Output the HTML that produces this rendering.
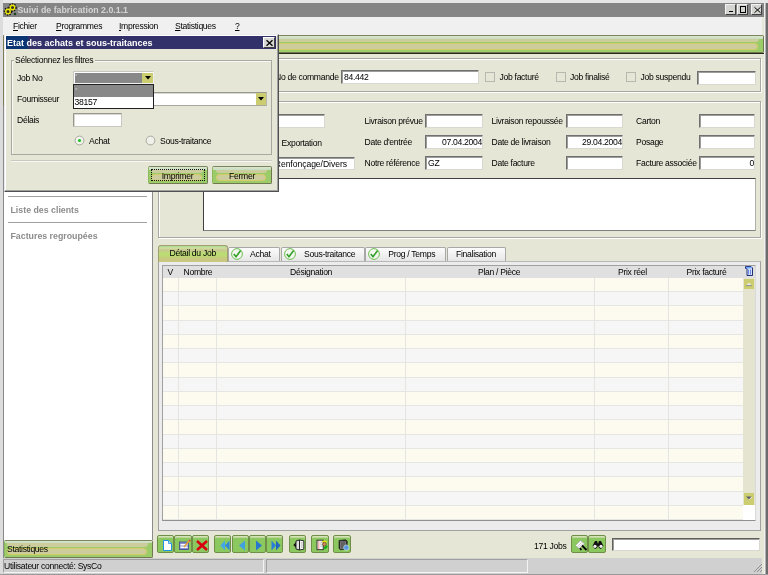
<!DOCTYPE html>
<html><head><meta charset="utf-8">
<style>
*{box-sizing:border-box;margin:0;padding:0}
html,body{width:768px;height:575px;overflow:hidden;-webkit-font-smoothing:antialiased;background:#e6e6d6;font-family:"Liberation Sans",sans-serif;font-size:8.6px;letter-spacing:-0.3px;color:#000}
.a{position:absolute}
svg.a{overflow:visible}
.t{position:absolute;white-space:nowrap;line-height:10px}
.tb{position:absolute;background:#fff;border:1px solid;border-color:#707070 #d8d8d0 #d8d8d0 #707070;box-shadow:inset 1px 1px 0 #9c9c98}
.gb{position:absolute;border:1px solid #a8a8a0;box-shadow:inset 1px 1px 0 #fff, 1px 1px 0 #fff}
.cb{position:absolute;width:10px;height:10px;border:1px solid #b8b8b0;background:#e6e6d6}
.gbtn{position:absolute;background:#8cc860;border:1px solid #6f8f48;border-radius:2px;box-shadow:inset 0 1px 0 #d8e0b8, inset 0 2px 0 #b8d898}
</style></head><body><div style="position:absolute;left:0;top:0;width:768px;height:575px;overflow:hidden;will-change:transform">
<div class="a" style="left:0px;top:0px;width:768px;height:3px;background:#e6e6e6"></div>
<div class="a" style="left:0px;top:0px;width:3px;height:575px;background:#dcdcdc"></div>
<div class="a" style="left:2.5px;top:16px;width:1.5px;height:543px;background:#8a8a8a"></div>
<div class="a" style="left:2.5px;top:35.5px;width:1.5px;height:70.5px;background:#7c7c58"></div>
<div class="a" style="left:762px;top:0px;width:6px;height:575px;background:#e6e6d6"></div>
<div class="a" style="left:764px;top:0px;width:1px;height:575px;background:#f0f0f0"></div>
<div class="a" style="left:765px;top:0px;width:1px;height:575px;background:#b0b0b0"></div>
<div class="a" style="left:766px;top:0px;width:2px;height:575px;background:#6c6c6c"></div>
<div class="a" style="left:762px;top:0px;width:6px;height:3px;background:#e6e6e6"></div>
<div class="a" style="left:3px;top:3px;width:761px;height:13.5px;background:#858585"></div>
<div class="t" style="left:17.5px;top:3.5px;font-weight:bold;font-size:8.8px;letter-spacing:0;color:#d4d4d4;line-height:12px">Suivi de fabrication 2.0.1.1</div>
<svg class="a" style="left:3.5px;top:3px" width="13" height="13" viewBox="0 0 13 13"><circle cx="4" cy="8.5" r="3" fill="none" stroke="#181810" stroke-width="2.6" stroke-dasharray="1.2 1"/><circle cx="8.5" cy="4.5" r="3" fill="none" stroke="#181810" stroke-width="2.6" stroke-dasharray="1.2 1"/><circle cx="4" cy="8.5" r="2.2" fill="#303020" stroke="#f0e800" stroke-width="1.4"/><circle cx="8.5" cy="4.5" r="2.2" fill="#303020" stroke="#f0e800" stroke-width="1.4"/><circle cx="11" cy="11" r="1.3" fill="#204020"/></svg>
<div class="a" style="left:725px;top:4px;width:11px;height:10.5px;background:#d4d4d0;border:1px solid;border-color:#f4f4f4 #404040 #404040 #f4f4f4"><div class="a" style="left:3px;top:5.5px;width:4px;height:1.5px;background:#000"></div></div>
<div class="a" style="left:737px;top:4px;width:11px;height:10.5px;background:#d4d4d0;border:1px solid;border-color:#f4f4f4 #404040 #404040 #f4f4f4"><div class="a" style="left:2px;top:1px;width:6px;height:6.5px;border:1px solid #000;border-top-width:1.6px"></div></div>
<div class="a" style="left:750.5px;top:4px;width:11.5px;height:10.5px;background:#d4d4d0;border:1px solid;border-color:#f4f4f4 #404040 #404040 #f4f4f4"><svg class="a" style="left:2.2px;top:1.8px" width="7" height="6"><path d="M0.5 0.3 L6.5 5.7 M6.5 0.3 L0.5 5.7" stroke="#000" stroke-width="1"/></svg></div>
<div class="a" style="left:3px;top:16.5px;width:759px;height:18.5px;background:#f0f0f0"></div>
<div class="t" style="left:13px;top:21px;"><u>F</u>ichier</div>
<div class="t" style="left:56px;top:21px;"><u>P</u>rogrammes</div>
<div class="t" style="left:119px;top:21px;"><u>I</u>mpression</div>
<div class="t" style="left:175px;top:21px;"><u>S</u>tatistiques</div>
<div class="t" style="left:235px;top:21px;"><u>?</u></div>
<div class="a" style="left:4px;top:52.5px;width:760px;height:1.5px;background:#282818"></div>
<div class="a" style="left:4px;top:35px;width:760px;height:18px;background:#9ccc6a;border:1px solid;border-color:#7c8460 #707850 #707850 #8cb860;border-radius:2px"><div class="a" style="left:0;right:0;top:0;height:2.5px;background:linear-gradient(#dce6c8,#c4dcc4)"></div><div class="a" style="left:2.5px;right:4px;top:2.5px;height:3.5px;background:#cccc9c;border-radius:0 0 3px 3px"></div><div class="a" style="left:2.5px;right:5px;top:7px;bottom:2px;background:#cccc9c;border:1px solid #d4cc68;border-radius:5px/4px"></div></div>
<div class="a" style="left:4px;top:54px;width:149px;height:486px;background:#fff;border-right:1px solid #8c8c8c"></div>
<div class="a" style="left:8px;top:196px;width:139px;height:1px;background:#a0a0a0"></div>
<div class="a" style="left:8px;top:222px;width:139px;height:1px;background:#a0a0a0"></div>
<div class="t" style="left:10.5px;top:205px;font-weight:bold;font-size:8.8px;letter-spacing:0;color:#8c8c8c">Liste des clients</div>
<div class="t" style="left:10.5px;top:231px;font-weight:bold;font-size:8.8px;letter-spacing:0;color:#8c8c8c">Factures regroupées</div>
<div class="gb" style="left:157.5px;top:58px;width:603.5px;height:33.5px"></div>
<div class="t" style="left:275px;top:72px;">No de commande</div>
<div class="tb" style="left:341px;top:70px;width:138px;height:14px;"><div class="t" style="left:2px;top:1px">84.442</div></div>
<div class="cb" style="left:485px;top:72px"></div>
<div class="t" style="left:499.5px;top:72px;">Job facturé</div>
<div class="cb" style="left:556px;top:72px"></div>
<div class="t" style="left:570px;top:72px;">Job finalisé</div>
<div class="cb" style="left:626px;top:72px"></div>
<div class="t" style="left:640.5px;top:72px;">Job suspendu</div>
<div class="tb" style="left:697px;top:71px;width:59px;height:14px;"></div>
<div class="gb" style="left:157.5px;top:101px;width:603.5px;height:136.5px"></div>
<div class="tb" style="left:230px;top:114px;width:95px;height:14px;"></div>
<div class="t" style="left:281.5px;top:137.5px;">Exportation</div>
<div class="tb" style="left:240px;top:157px;width:115px;height:12.5px;"><div class="t" style="right:7px;top:1px;text-align:right"><span style='letter-spacing:-0.05px'>Renfonçage/Divers</span></div></div>
<div class="t" style="left:364.5px;top:115.5px;">Livraison prévue</div>
<div class="t" style="left:364.5px;top:136.5px;">Date d'entrée</div>
<div class="t" style="left:364.5px;top:157.5px;">Notre référence</div>
<div class="t" style="left:491.5px;top:115.5px;">Livraison repoussée</div>
<div class="t" style="left:491.5px;top:136.5px;">Date de livraison</div>
<div class="t" style="left:491.5px;top:157.5px;">Date facture</div>
<div class="t" style="left:636px;top:115.5px;">Carton</div>
<div class="t" style="left:636px;top:136.5px;">Posage</div>
<div class="t" style="left:636px;top:157.5px;">Facture associée</div>
<div class="tb" style="left:425px;top:114px;width:58px;height:14px;"></div>
<div class="tb" style="left:425px;top:135px;width:58px;height:13.5px;"><div class="t" style="right:0px;top:1px;text-align:right">07.04.2004</div></div>
<div class="tb" style="left:425px;top:156px;width:58px;height:13.5px;"><div class="t" style="left:2px;top:1px">GZ</div></div>
<div class="tb" style="left:566px;top:114px;width:57px;height:14px;"></div>
<div class="tb" style="left:566px;top:135px;width:57px;height:13.5px;"><div class="t" style="right:0px;top:1px;text-align:right">29.04.2004</div></div>
<div class="tb" style="left:566px;top:156px;width:57px;height:13.5px;"></div>
<div class="tb" style="left:699px;top:114px;width:56px;height:14px;"></div>
<div class="tb" style="left:699px;top:135px;width:56px;height:13.5px;"></div>
<div class="tb" style="left:699px;top:156px;width:56px;height:13.5px;"><div class="t" style="right:0px;top:1px;text-align:right">0</div></div>
<div class="a" style="left:203px;top:178px;width:553px;height:53px;background:#fff;border:1px solid;border-color:#404040 #b0b0a8 #808080 #404040"></div>
<div class="a" style="left:157.5px;top:260.5px;width:603.0px;height:270.0px;background:#ececec;border:1px solid #a0a0a0;border-top-color:#b8b8b8"></div>
<div class="a" style="left:227.5px;top:247px;width:52.5px;height:14px;background:linear-gradient(#fcfcfc,#e6e6e6);border:1px solid #a8a8a8;border-bottom:none;border-radius:2px 2px 0 0"><svg class="a" style="left:2.3px;top:-0.5px" width="12" height="12" viewBox="0 0 12 12"><circle cx="6" cy="6" r="5.4" fill="#f4f6f0" stroke="#6cc050" stroke-width="1"/><path d="M2.8 6 L5 8.8 L9.6 2.6" fill="none" stroke="#30a028" stroke-width="1.6"/></svg><div class="t" style="left:21.5px;top:1px">Achat</div></div>
<div class="a" style="left:280.5px;top:247px;width:84.0px;height:14px;background:linear-gradient(#fcfcfc,#e6e6e6);border:1px solid #a8a8a8;border-bottom:none;border-radius:2px 2px 0 0"><svg class="a" style="left:2.3px;top:-0.5px" width="12" height="12" viewBox="0 0 12 12"><circle cx="6" cy="6" r="5.4" fill="#f4f6f0" stroke="#6cc050" stroke-width="1"/><path d="M2.8 6 L5 8.8 L9.6 2.6" fill="none" stroke="#30a028" stroke-width="1.6"/></svg><div class="t" style="left:22.5px;top:1px">Sous-traitance</div></div>
<div class="a" style="left:364.5px;top:247px;width:81.5px;height:14px;background:linear-gradient(#fcfcfc,#e6e6e6);border:1px solid #a8a8a8;border-bottom:none;border-radius:2px 2px 0 0"><svg class="a" style="left:2.3px;top:-0.5px" width="12" height="12" viewBox="0 0 12 12"><circle cx="6" cy="6" r="5.4" fill="#f4f6f0" stroke="#6cc050" stroke-width="1"/><path d="M2.8 6 L5 8.8 L9.6 2.6" fill="none" stroke="#30a028" stroke-width="1.6"/></svg><div class="t" style="left:22.8px;top:1px">Prog / Temps</div></div>
<div class="a" style="left:446.5px;top:247px;width:59.0px;height:14px;background:linear-gradient(#fcfcfc,#e6e6e6);border:1px solid #a8a8a8;border-bottom:none;border-radius:2px 2px 0 0"><div class="t" style="left:0;right:0;top:1px;text-align:center">Finalisation</div></div>
<div class="a" style="left:157.5px;top:244.5px;width:70.5px;height:17.0px;background:linear-gradient(#a8d890 0,#d0e0a0 2px,#c8c890 4px,#b8e070 8px,#c8c880 13px,#c8c880 17px);border:1px solid #a0a070;border-bottom:none;border-radius:3px 3px 0 0"><div class="t" style="left:0;right:0;top:2.5px;text-align:center">Détail du Job</div></div>
<div class="a" style="left:162px;top:264.5px;width:594px;height:256.0px;background:#fff;border:1px solid #a0a0a0;border-right-color:#d8d8d8;border-bottom-color:#909090"></div>
<div class="a" style="left:163px;top:265.5px;width:592px;height:12.5px;background:#e0e0e0"></div>
<div class="a" style="left:163px;top:277.75px;width:580px;height:14.25px;background:#fdfbef;border-bottom:1px solid #e6e6e2"></div>
<div class="a" style="left:163px;top:292.0px;width:580px;height:14.25px;background:#f6f6f6;border-bottom:1px solid #e6e6e2"></div>
<div class="a" style="left:163px;top:306.25px;width:580px;height:14.25px;background:#fdfbef;border-bottom:1px solid #e6e6e2"></div>
<div class="a" style="left:163px;top:320.5px;width:580px;height:14.25px;background:#f6f6f6;border-bottom:1px solid #e6e6e2"></div>
<div class="a" style="left:163px;top:334.75px;width:580px;height:14.25px;background:#fdfbef;border-bottom:1px solid #e6e6e2"></div>
<div class="a" style="left:163px;top:349.0px;width:580px;height:14.25px;background:#f6f6f6;border-bottom:1px solid #e6e6e2"></div>
<div class="a" style="left:163px;top:363.25px;width:580px;height:14.25px;background:#fdfbef;border-bottom:1px solid #e6e6e2"></div>
<div class="a" style="left:163px;top:377.5px;width:580px;height:14.25px;background:#f6f6f6;border-bottom:1px solid #e6e6e2"></div>
<div class="a" style="left:163px;top:391.75px;width:580px;height:14.25px;background:#fdfbef;border-bottom:1px solid #e6e6e2"></div>
<div class="a" style="left:163px;top:406.0px;width:580px;height:14.25px;background:#f6f6f6;border-bottom:1px solid #e6e6e2"></div>
<div class="a" style="left:163px;top:420.25px;width:580px;height:14.25px;background:#fdfbef;border-bottom:1px solid #e6e6e2"></div>
<div class="a" style="left:163px;top:434.5px;width:580px;height:14.25px;background:#f6f6f6;border-bottom:1px solid #e6e6e2"></div>
<div class="a" style="left:163px;top:448.75px;width:580px;height:14.25px;background:#fdfbef;border-bottom:1px solid #e6e6e2"></div>
<div class="a" style="left:163px;top:463.0px;width:580px;height:14.25px;background:#f6f6f6;border-bottom:1px solid #e6e6e2"></div>
<div class="a" style="left:163px;top:477.25px;width:580px;height:14.25px;background:#fdfbef;border-bottom:1px solid #e6e6e2"></div>
<div class="a" style="left:163px;top:491.5px;width:580px;height:14.25px;background:#f6f6f6;border-bottom:1px solid #e6e6e2"></div>
<div class="a" style="left:163px;top:505.75px;width:580px;height:14.25px;background:#fdfbef;border-bottom:1px solid #e6e6e2"></div>
<div class="a" style="left:178px;top:278px;width:1px;height:242px;background:#e4e4e0"></div>
<div class="a" style="left:216px;top:278px;width:1px;height:242px;background:#e4e4e0"></div>
<div class="a" style="left:404.5px;top:278px;width:1.0px;height:242px;background:#e4e4e0"></div>
<div class="a" style="left:594px;top:278px;width:1px;height:242px;background:#e4e4e0"></div>
<div class="a" style="left:668px;top:278px;width:1px;height:242px;background:#e4e4e0"></div>
<div class="t" style="left:167.5px;top:266.5px;">V</div>
<div class="t" style="left:183.5px;top:266.5px;">Nombre</div>
<div class="t" style="left:290px;top:266.5px;">Désignation</div>
<div class="t" style="left:478px;top:266.5px;">Plan / Pièce</div>
<div class="t" style="left:618px;top:266.5px;">Prix réel</div>
<div class="t" style="left:686.5px;top:266.5px;">Prix facturé</div>
<div class="a" style="left:743px;top:278px;width:12px;height:227px;background:#e4e4d0"></div>
<div class="a" style="left:743px;top:505px;width:12px;height:15px;background:#fff"></div>
<div class="a" style="left:744px;top:279px;width:10px;height:10px;background:#cccc70"><svg class="a" style="left:2px;top:3px" width="6" height="4"><path d="M0 3.5 L3 0.5 L6 3.5Z" fill="#e8e8e0"/><path d="M0 3.6 H6" stroke="#808088" stroke-width="0.8"/></svg></div>
<div class="a" style="left:743.7px;top:493.3px;width:10.7px;height:11.5px;background:#cccc70"><svg class="a" style="left:2px;top:3px" width="6" height="4"><path d="M0 0.5 L3 3.5 L6 0.5Z" fill="#5c5c70"/><path d="M3.2 3.6 L6 0.8" stroke="#fff" stroke-width="0.8"/></svg></div>
<svg class="a" style="left:745px;top:266px" width="8" height="10" viewBox="0 0 8 10"><path d="M0.5 0.5 H6 L7.5 2 V9.5 H2 V2.5 H0.5Z" fill="#dce8ff" stroke="#0a1a60" stroke-width="0.9"/><rect x="0.8" y="0.8" width="6" height="1.6" fill="#70a0ff"/><path d="M3.6 3.5 V8.5 M5.6 3.5 V8.5" stroke="#6080e0" stroke-width="1"/></svg>
<div class="gbtn" style="left:157.3px;top:535.3px;width:17.1px;height:17.4px"><svg class="a" style="left:4.5px;top:3.5px" width="9" height="11" viewBox="0 0 9 11"><path d="M0.5 0.5 H5.5 L8.5 3.5 V10.5 H0.5Z" fill="#fff" stroke="#2090e0" stroke-width="1"/><path d="M5.5 0.5 V3.5 H8.5" fill="#b0d8f8" stroke="#2090e0" stroke-width="0.8"/></svg></div>
<div class="gbtn" style="left:174.4px;top:535.3px;width:17.5px;height:17.4px"><svg class="a" style="left:3.5px;top:3px" width="12" height="12" viewBox="0 0 12 12"><rect x="0.5" y="3" width="9" height="7.5" fill="#8890d0" stroke="#404890" stroke-width="0.8"/><rect x="1.5" y="5" width="7" height="1.5" fill="#fff"/><rect x="1.5" y="7.5" width="7" height="1.5" fill="#fff"/><path d="M5 8 L10.5 1.5" stroke="#e0a040" stroke-width="1.8"/><path d="M10 1 L11.3 2.2" stroke="#e04040" stroke-width="1.6"/></svg></div>
<div class="gbtn" style="left:191.9px;top:535.3px;width:17.5px;height:17.4px"><svg class="a" style="left:3px;top:3.5px" width="12" height="11" viewBox="0 0 12 11"><path d="M1 1 L11 10 M11 1 L1 10" stroke="#d80010" stroke-width="2.6"/></svg></div>
<div class="gbtn" style="left:214.4px;top:535.3px;width:17.1px;height:17.4px"><svg class="a" style="left:4.5px;top:3.5px" width="10" height="11" viewBox="0 0 10 11"><path d="M5 0.5 L0.5 5.5 L5 10.5Z" fill="#40a8e8"/><path d="M9.5 0.5 L5 5.5 L9.5 10.5Z" fill="#3088d8"/></svg></div>
<div class="gbtn" style="left:231.5px;top:535.3px;width:17.5px;height:17.4px"><svg class="a" style="left:5.5px;top:3.5px" width="8" height="11" viewBox="0 0 8 11"><path d="M7 0.5 L1 5.5 L7 10.5Z" fill="#40a0e0"/></svg></div>
<div class="gbtn" style="left:249px;top:535.3px;width:17.2px;height:17.4px"><svg class="a" style="left:5px;top:3.5px" width="8" height="11" viewBox="0 0 8 11"><path d="M1 0.5 L7 5.5 L1 10.5Z" fill="#2878d0"/></svg></div>
<div class="gbtn" style="left:266.2px;top:535.3px;width:17.3px;height:17.4px"><svg class="a" style="left:4px;top:3.5px" width="10" height="11" viewBox="0 0 10 11"><path d="M0.5 0.5 L5 5.5 L0.5 10.5Z" fill="#2880d8"/><path d="M5 0.5 L9.5 5.5 L5 10.5Z" fill="#2068c0"/></svg></div>
<div class="gbtn" style="left:288.5px;top:535.3px;width:17.6px;height:17.4px"><svg class="a" style="left:3.5px;top:3px" width="12" height="12" viewBox="0 0 12 12"><path d="M0.3 6 L3.2 3 L3.2 9Z" fill="#181818"/><path d="M3 2 L6.5 1 L6.5 11 L3 10Z" fill="#e0e0e0" stroke="#181818" stroke-width="0.9"/><path d="M6.5 1 L10.8 1.8 L10.8 10.2 L6.5 11Z" fill="#f8f8f8" stroke="#181818" stroke-width="0.9"/><path d="M7.8 4 H9.8 M7.8 6 H9.8 M7.8 8 H9.8" stroke="#909090" stroke-width="0.7"/></svg></div>
<div class="gbtn" style="left:311.4px;top:535.3px;width:17.2px;height:17.4px"><svg class="a" style="left:3.5px;top:3px" width="12" height="12" viewBox="0 0 12 12"><rect x="1" y="1.2" width="6.2" height="9.5" fill="#fafafa" stroke="#282828" stroke-width="0.9"/><path d="M2.3 3 H3.3 M2.3 5 H3.3 M2.3 7 H3.3 M2.3 9 H3.3" stroke="#e02020" stroke-width="1"/><path d="M4.2 3.2 H6.2 M4.2 5.2 H6.2 M4.2 7.2 H6.2" stroke="#909090" stroke-width="0.6"/><path d="M6 2.2 Q8.5 0.8 11 2.4 L10.8 3.6 L6.2 3.6Z" fill="#f0e010"/><circle cx="8.4" cy="5.2" r="1.8" fill="#d89060" stroke="#402010" stroke-width="0.5"/><path d="M8.2 9.8 L11.2 7" stroke="#10b010" stroke-width="2"/></svg></div>
<div class="gbtn" style="left:333.3px;top:535.3px;width:17.8px;height:17.4px"><svg class="a" style="left:3.5px;top:3px" width="12" height="12" viewBox="0 0 12 12"><path d="M1 1.5 L7.5 0.8 L9.2 2 L9.2 10 L2.5 10.8 L1 9.5Z" fill="#303030" stroke="#101010" stroke-width="0.6"/><rect x="2.5" y="2.8" width="5.3" height="6.5" fill="#606060" stroke="#a0a0a0" stroke-width="0.5"/><circle cx="8.3" cy="8.6" r="2.7" fill="#5a9ae0" stroke="#f0f8ff" stroke-width="0.5"/></svg></div>
<div class="t" style="left:534px;top:540.5px;">171 Jobs</div>
<div class="gbtn" style="left:571.3px;top:535.3px;width:16.9px;height:17.4px"><svg class="a" style="left:3px;top:3px" width="13" height="12" viewBox="0 0 13 12"><path d="M0.5 6.5 L5.5 1.5 L9.5 4.8 L4.5 9.8Z" fill="#f8f8f8" stroke="#a0a0a0" stroke-width="0.6"/><path d="M2.5 7.5 L6.5 3.5 M3.8 8.6 L7.8 4.6" stroke="#b0b0b0" stroke-width="0.6"/><path d="M7 6.5 L11.5 11" stroke="#000" stroke-width="1.8"/><path d="M5 9 L6.3 11.2" stroke="#000" stroke-width="1.6"/></svg></div>
<div class="gbtn" style="left:588.4px;top:535.3px;width:17.4px;height:17.4px"><svg class="a" style="left:3px;top:4px" width="12" height="10" viewBox="0 0 12 10"><path d="M3 1 L5 1 L6 4 L7 1 L9 1 L11.5 6 L9 9 L7 8 L6 5.5 L5 8 L3 9 L0.5 6Z" fill="#101010"/><circle cx="3" cy="6.3" r="1.6" fill="#f0f0f0"/><circle cx="9" cy="6.3" r="1.6" fill="#f0f0f0"/></svg></div>
<div class="tb" style="left:612px;top:537.5px;width:148px;height:13.5px;border-color:#606060 #d8d8d0 #d8d8d0 #606060"></div>
<div class="a" style="left:3.5px;top:539.5px;width:149.0px;height:18.0px;background:#9ccc6a;border:1px solid;border-color:#7c8460 #707850 #707850 #8cb860;border-radius:2px"><div class="a" style="left:0;right:0;top:0;height:2.5px;background:linear-gradient(#dce6c8,#c4dcc4)"></div><div class="a" style="left:2.5px;right:4px;top:2.5px;height:3.5px;background:#cccc9c;border-radius:0 0 3px 3px"></div><div class="a" style="left:2.5px;right:5px;top:7px;bottom:2px;background:#cccc9c;border:1px solid #d4cc68;border-radius:5px/4px"></div></div>
<div class="t" style="left:7px;top:543.5px;">Statistiques</div>
<div class="a" style="left:3px;top:557.5px;width:759px;height:17.5px;background:#d0d0d0"></div>
<div class="a" style="left:3px;top:559px;width:261px;height:14px;border:1px solid;border-color:#a0a0a0 #f4f4f4 #f4f4f4 #a0a0a0"></div>
<div class="a" style="left:266px;top:559px;width:262px;height:14px;border:1px solid;border-color:#a0a0a0 #f4f4f4 #f4f4f4 #a0a0a0"></div>
<div class="a" style="left:0px;top:573.5px;width:768px;height:1.5px;background:#9a9a9a"></div>
<div class="t" style="left:4px;top:561px;">Utilisateur connecté: SysCo</div>
<svg class="a" style="left:753px;top:563px" width="10" height="10"><path d="M9 1 L1 9 M9 4 L4 9 M9 7 L7 9" stroke="#909090" stroke-width="1"/></svg>
<div class="a" style="left:3.5px;top:33.5px;width:275.5px;height:158.0px;background:#e6e6d6;border:1px solid;border-color:#ececec #505050 #505050 #ececec;box-shadow:inset -1px -1px 0 #a0a0a0, inset 1px 1px 0 #fff"></div>
<div class="a" style="left:6px;top:36px;width:270px;height:13px;background:#33316a"></div>
<div class="a" style="left:6px;top:36px;width:22px;height:13px;background:#0b3572"></div>
<div class="t" style="left:7px;top:37.5px;font-weight:bold;font-size:9px;letter-spacing:0;color:#fff;line-height:11px">Etat des achats et sous-traitances</div>
<div class="a" style="left:263px;top:37px;width:11.5px;height:10.5px;background:#d8d8d4;border:1px solid;border-color:#fff #404040 #404040 #fff"><svg class="a" style="left:2px;top:1.5px" width="7" height="6" viewBox="0 0 7 6"><path d="M0.5 0.3 L6.5 5.7 M6.5 0.3 L0.5 5.7" stroke="#000" stroke-width="1.3"/></svg></div>
<div class="a" style="left:11px;top:60px;width:261px;height:94.5px;border:1px solid #a8a8a0;box-shadow:inset 1px 1px 0 #fafaf4"></div>
<div class="t" style="left:13.5px;top:55px;padding:0 1.5px;background:#e6e6d6">Sélectionnez les filtres</div>
<div class="t" style="left:17px;top:73px;">Job No</div>
<div class="t" style="left:17px;top:94px;">Fournisseur</div>
<div class="t" style="left:17px;top:115px;">Délais</div>
<div class="tb" style="left:73px;top:92px;width:194px;height:13.5px;border-color:#989890 #b8b8b0 #a8a8a0 #989890;box-shadow:inset 1px 1px 0 #d8d8d0"></div>
<div class="a" style="left:255.5px;top:93px;width:10.5px;height:11.5px;background:#cccc70"><svg class="a" style="left:2.5px;top:4px" width="6" height="4"><path d="M0 0 L6 0 L3 3.5Z" fill="#000"/></svg></div>
<div class="tb" style="left:73px;top:113px;width:48.5px;height:13.5px;border-color:#989890 #c8c8c0 #c8c8c0 #989890;box-shadow:inset 1px 1px 0 #d8d8d0"></div>
<svg class="a" style="left:74px;top:135px" width="11" height="11" viewBox="0 0 11 11"><circle cx="5.5" cy="5.5" r="4.4" fill="#f4f4ee" stroke="#a0a098" stroke-width="0.9"/><circle cx="5.5" cy="5.5" r="1.6" fill="#20c020"/></svg>
<div class="t" style="left:89px;top:135.5px;">Achat</div>
<svg class="a" style="left:144.5px;top:135px" width="11" height="11" viewBox="0 0 11 11"><circle cx="5.5" cy="5.5" r="4.4" fill="#f0f0ea" stroke="#a0a098" stroke-width="0.9"/></svg>
<div class="t" style="left:160px;top:135.5px;">Sous-traitance</div>
<div class="a" style="left:11px;top:159.5px;width:261px;height:1.0px;background:#c8c8c0;box-shadow:0 1px 0 #f8f8f0"></div>
<div class="a" style="left:147.5px;top:166.3px;width:60.0px;height:17.7px;background:#9ccc6a;border:1px solid;border-color:#7c8460 #707850 #707850 #8cb860;border-radius:2px"><div class="a" style="left:0;right:0;top:0;height:2.5px;background:linear-gradient(#dce6c8,#c4dcc4)"></div><div class="a" style="left:2.5px;right:4px;top:2.5px;height:3.5px;background:#cccc9c;border-radius:0 0 3px 3px"></div><div class="a" style="left:2.5px;right:5px;top:7px;bottom:2px;background:#cccc9c;border:1px solid #d4cc68;border-radius:5px/4px"></div><div class="a" style="left:2px;top:1.5px;right:2px;bottom:1.5px;border:1px dotted #101010"></div><div class="t" style="left:0;right:0;top:3.5px;text-align:center">Imprimer</div></div>
<div class="a" style="left:212px;top:166.3px;width:60px;height:17.7px;background:#9ccc6a;border:1px solid;border-color:#7c8460 #707850 #707850 #8cb860;border-radius:2px"><div class="a" style="left:0;right:0;top:0;height:2.5px;background:linear-gradient(#dce6c8,#c4dcc4)"></div><div class="a" style="left:2.5px;right:4px;top:2.5px;height:3.5px;background:#cccc9c;border-radius:0 0 3px 3px"></div><div class="a" style="left:2.5px;right:5px;top:7px;bottom:2px;background:#cccc9c;border:1px solid #d4cc68;border-radius:5px/4px"></div><div class="t" style="left:0;right:0;top:3.5px;text-align:center">Fermer</div></div>
<div class="a" style="left:73px;top:71px;width:81px;height:13px;background:#888;border:1px solid;border-color:#c8c8c0 #f0f0f0 #f0f0f0 #c8c8c0;box-shadow:inset 1px 1px 0 #fff"></div>
<div class="a" style="left:142px;top:73px;width:11px;height:10px;background:#cccc70"><svg class="a" style="left:2.5px;top:3px" width="6" height="4"><path d="M0 0 L6 0 L3 3.5Z" fill="#000"/></svg></div>
<div class="t" style="left:75px;top:71px;color:#ccc;font-size:6px">*</div>
<div class="a" style="left:73px;top:84px;width:81px;height:24.5px;background:#fff;border:1px solid #202020"></div>
<div class="a" style="left:74px;top:85px;width:79px;height:11.5px;background:#888"></div>
<div class="t" style="left:75px;top:84.5px;color:#ccc;font-size:6px">*</div>
<div class="t" style="left:74.5px;top:97px;">38157</div>
</div></body></html>
